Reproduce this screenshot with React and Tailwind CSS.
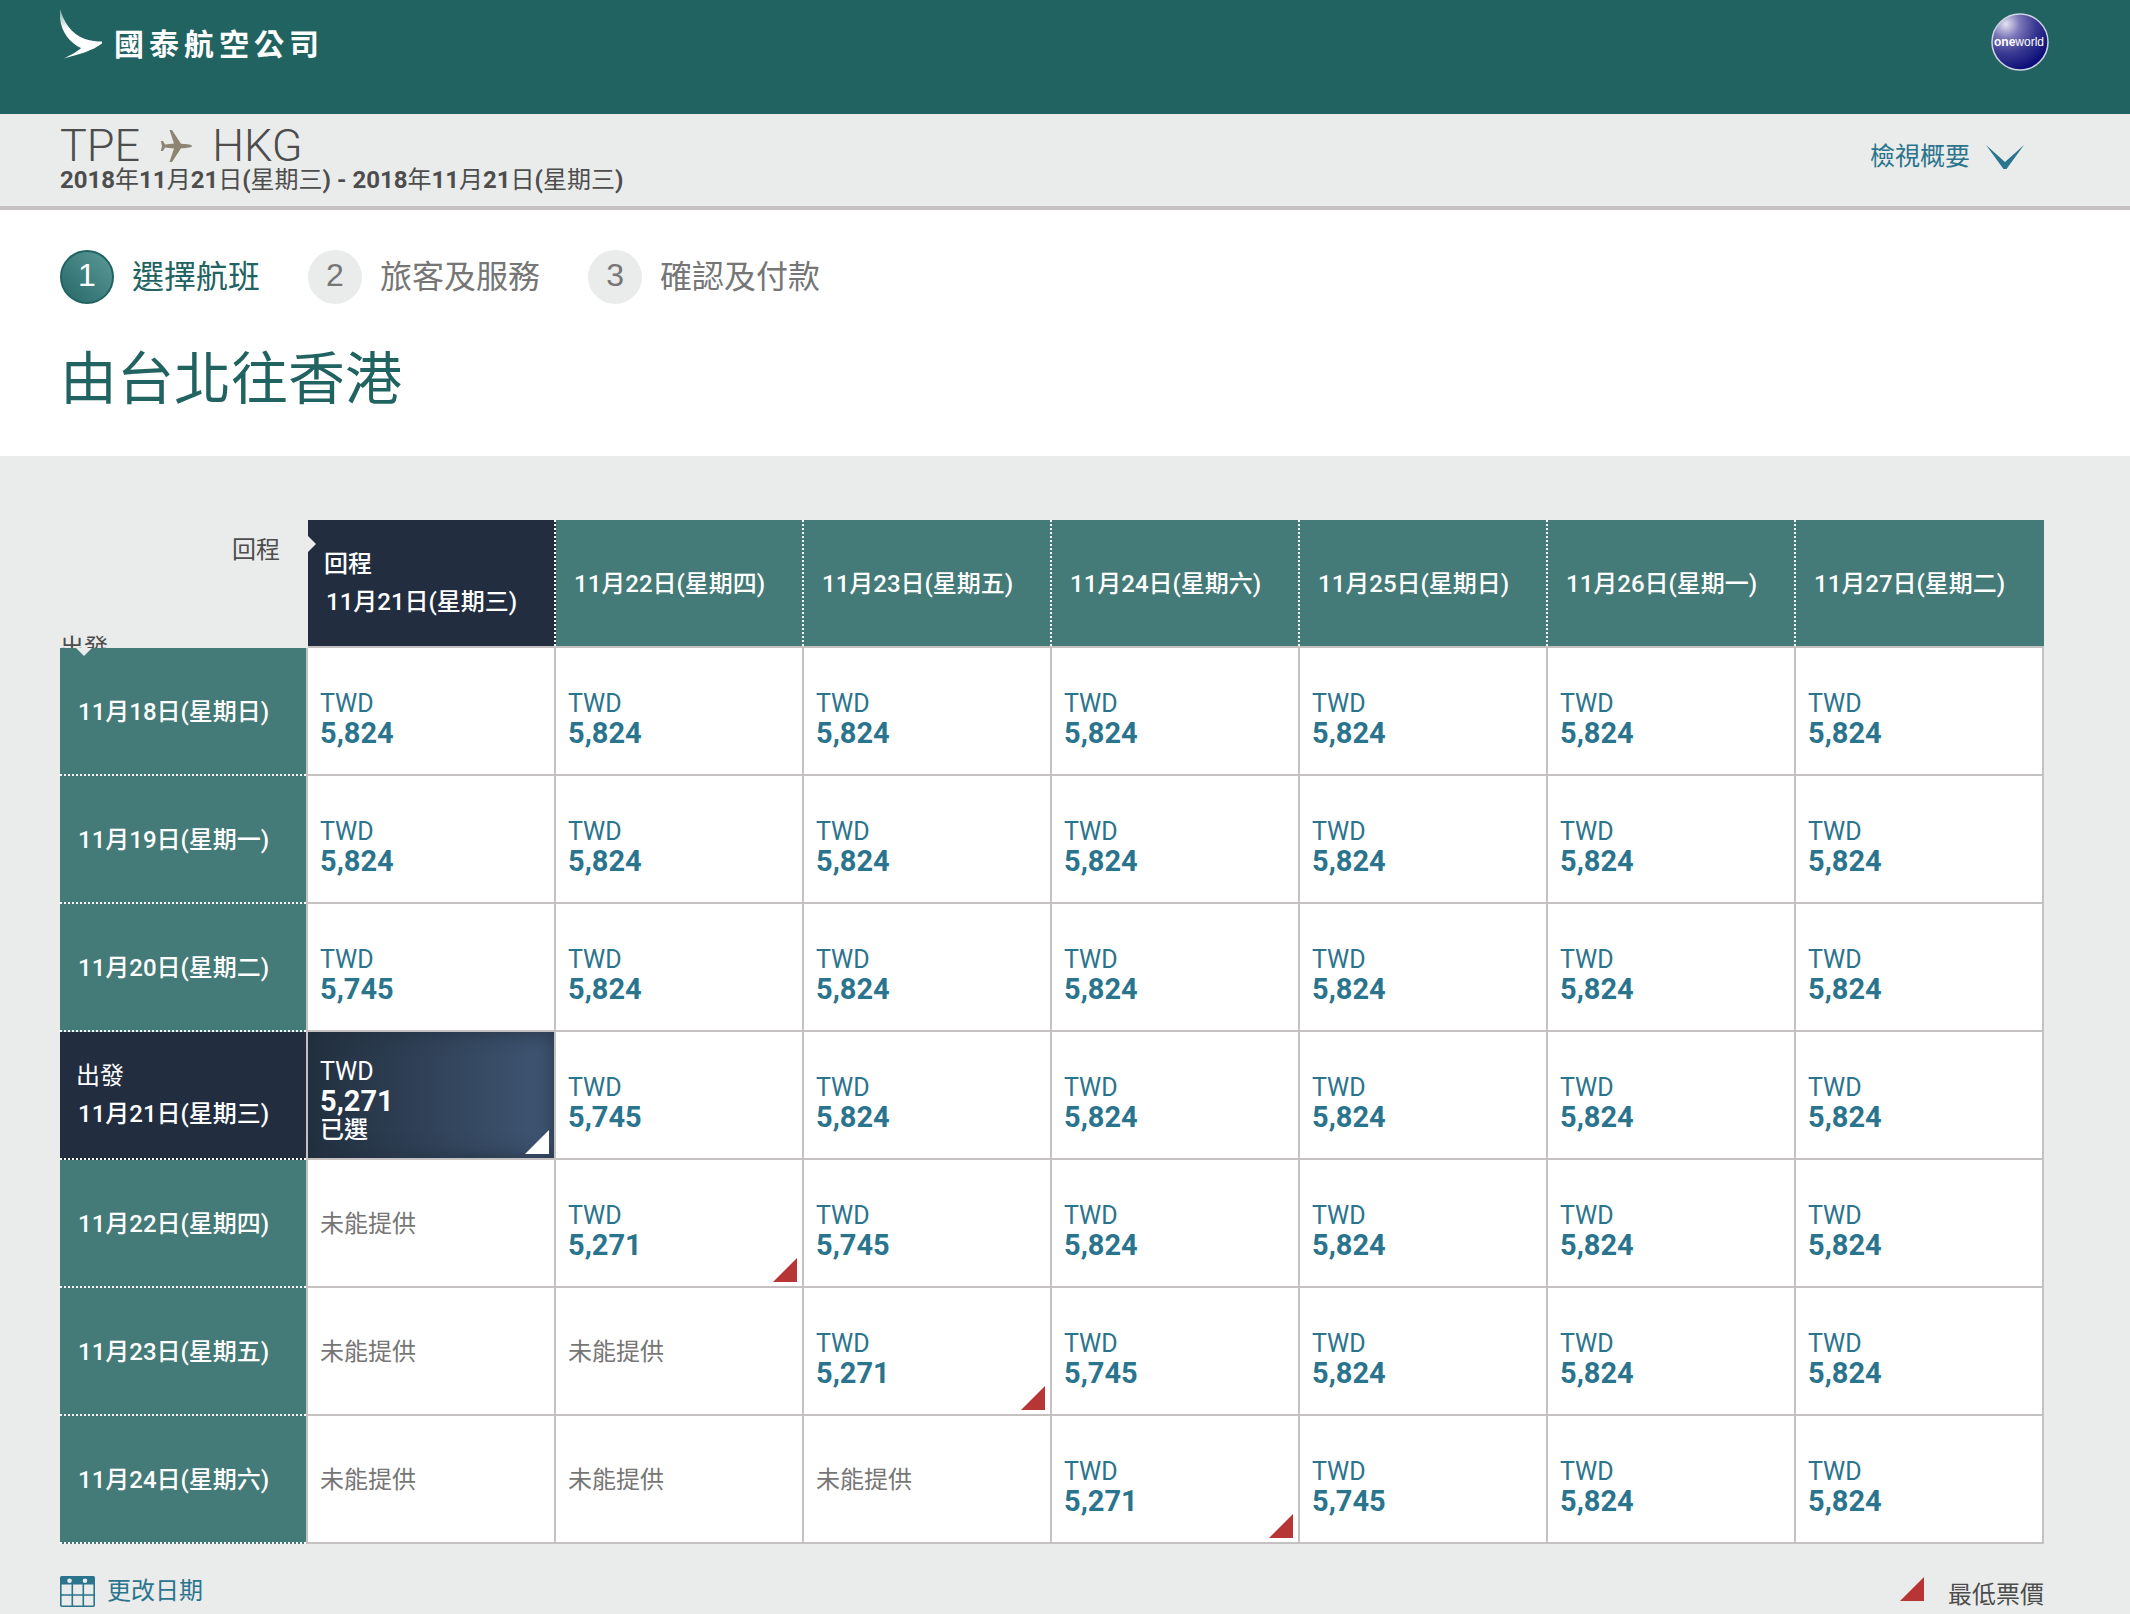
const RETURN_DATES = [
  '11月21日(星期三)',
  '11月22日(星期四)',
  '11月23日(星期五)',
  '11月24日(星期六)',
  '11月25日(星期日)',
  '11月26日(星期一)',
  '11月27日(星期二)',
];

const ROWS = [
  { date: '11月18日(星期日)', fares: ['5,824', '5,824', '5,824', '5,824', '5,824', '5,824', '5,824'] },
  { date: '11月19日(星期一)', fares: ['5,824', '5,824', '5,824', '5,824', '5,824', '5,824', '5,824'] },
  { date: '11月20日(星期二)', fares: ['5,745', '5,824', '5,824', '5,824', '5,824', '5,824', '5,824'] },
  { date: '11月21日(星期三)', selected: true, fares: ['5,271', '5,745', '5,824', '5,824', '5,824', '5,824', '5,824'] },
  { date: '11月22日(星期四)', fares: [null, '5,271', '5,745', '5,824', '5,824', '5,824', '5,824'] },
  { date: '11月23日(星期五)', fares: [null, null, '5,271', '5,745', '5,824', '5,824', '5,824'] },
  { date: '11月24日(星期六)', fares: [null, null, null, '5,271', '5,745', '5,824', '5,824'] },
];

const LOWEST = '5,271';

const STEPS = ['選擇航班', '旅客及服務', '確認及付款'];

function Corner({ className }) {
  return (
    <svg className={className} width="24" height="24" viewBox="0 0 24 24" aria-hidden="true">
      <path d="M24 0V24H0Z" fill="currentColor" />
    </svg>
  );
}

function BrushWing() {
  return (
    <svg width="42" height="50" viewBox="0 0 42 50" aria-hidden="true">
      <defs>
        <linearGradient id="wing" x1="0" y1="0" x2="0.3" y2="1">
          <stop offset="0" stopColor="#fff" stopOpacity="0.4" />
          <stop offset="0.4" stopColor="#fff" />
        </linearGradient>
      </defs>
      <path d="M0 0C4 13 11 25 25 30C31 32 37 32.500 42 32.500V34.500C32 42 20 45 4 49.500C12 45.500 18 42 21 39C8 33 -2 19 0 0Z" fill="url(#wing)" />
    </svg>
  );
}

function OneworldBadge() {
  return (
    <svg width="58" height="58" viewBox="0 0 58 58" role="img" aria-label="oneworld">
      <defs>
        <radialGradient id="globe" cx="0.25" cy="0.18" r="0.85">
          <stop offset="0" stopColor="#e4e2f2" />
          <stop offset="0.3" stopColor="#7a76b8" />
          <stop offset="0.62" stopColor="#3b3a92" />
          <stop offset="1" stopColor="#0c0f78" />
        </radialGradient>
      </defs>
      <circle cx="29" cy="29" r="28" fill="url(#globe)" stroke="#cfd3e2" strokeWidth="1.5" />
      <text x="28" y="33" textAnchor="middle" fontSize="12" fill="#fff" fontFamily="Liberation Sans, sans-serif">
        <tspan fontWeight="700">one</tspan>
        <tspan>world</tspan>
      </text>
    </svg>
  );
}

function Plane() {
  return (
    <svg width="32" height="32" viewBox="0 0 32 32" fill="#8d8471" aria-hidden="true">
      <path d="M32 16C32 17.300 28 18 21 18.300L12 32H9.500L14 18.500L5 17.600L3 21H0.800L2 16L0.800 11H3L5 14.400L14 13.500L9.500 0H12L21 13.700C28 14 32 14.700 32 16Z" />
    </svg>
  );
}

function CalendarIcon() {
  return (
    <svg width="35" height="31" viewBox="0 0 35 31" aria-hidden="true">
      <rect x="0.800" y="0.800" width="33.400" height="29.400" rx="1" fill="none" stroke="#2a748d" strokeWidth="1.600" />
      <path d="M0.800 0.800H34.200V8.500H0.800Z" fill="#2a748d" />
      <path d="M1 19H34M12.300 8V30M23.300 8V30" stroke="#2a748d" strokeWidth="1.600" />
      <circle cx="9.500" cy="4.700" r="2.300" fill="#eaeceb" />
      <circle cx="25" cy="4.700" r="2.300" fill="#eaeceb" />
    </svg>
  );
}

function Steps() {
  return (
    <ol className="flex gap-12">
      {STEPS.map((label, i) => (
        <li key={label} className={`flex items-center gap-[18px] text-[32px] leading-[54px] ${i === 0 ? 'text-[#216361]' : 'text-[#767676]'}`}>
          <span
            className={
              i === 0
                ? "size-[54px] rounded-full border-2 border-[#216361] bg-linear-to-tr from-[#27686a] to-[#5a9a96] text-center font-['Liberation_Sans',sans-serif] leading-[46px] text-white"
                : "size-[54px] rounded-full bg-[#eaeceb] text-center font-['Liberation_Sans',sans-serif] leading-[50px]"
            }
          >
            {i + 1}
          </span>
          <span>{label}</span>
        </li>
      ))}
    </ol>
  );
}

function FareCell({ fare, selected }) {
  if (!fare) {
    return (
      <td className="h-32 border-r-2 border-b-2 border-[#c5c1c1] bg-white px-3 text-2xl text-[#767676]">
        <div className="pt-0.5">未能提供</div>
      </td>
    );
  }
  return (
    <td className="h-32 border-r-2 border-b-2 border-[#c5c1c1] bg-white p-0">
      <button
        type="button"
        className={`relative flex h-[126px] w-full flex-col justify-center px-3 text-left ${
          selected
            ? 'bg-linear-to-r from-[#22303f] to-[#405674] pt-3 text-white shadow-[inset_0_0_20px_rgba(32,45,60,0.8)]'
            : 'pt-4 text-[#2a748d]'
        }`}
      >
        <span className="text-[25px] leading-7">TWD</span>
        <span className="text-[29px] leading-[30px] font-bold">{fare}</span>
        {selected && <span className="text-2xl leading-7 font-medium">已選</span>}
        {fare === LOWEST && (
          <Corner className={`absolute right-[5px] bottom-1 ${selected ? 'text-white' : 'text-[#b73535]'}`} />
        )}
      </button>
    </td>
  );
}

function FareTable() {
  return (
    <table className="w-full table-fixed border-separate border-spacing-0">
      <thead>
        <tr>
          <td className="h-32 p-0 align-top text-2xl text-[#4d4d4d]">
            <div className="flex h-32 flex-col justify-between overflow-hidden">
              <span className="pt-3 pr-7 text-right leading-9">回程</span>
              <span className="h-4 leading-8">出發</span>
            </div>
          </td>
          {RETURN_DATES.map((date, i) => (
            <th
              key={date}
              scope="col"
              className={`h-32 border-b-2 border-b-[#c5c1c1] p-0 text-left text-2xl font-medium text-white ${
                i === 0 ? 'bg-[#222e40]' : 'bg-[#447a77]'
              }`}
            >
              <div
                className={`relative flex h-[126px] flex-col justify-center ${
                  i < 6 ? 'border-r-2 border-dotted border-white' : ''
                } ${i > 0 ? 'pt-0.5' : ''}`}
              >
                {i === 0 && (
                  <>
                    <svg className="absolute top-4 left-0" width="8" height="16" viewBox="0 0 8 16" aria-hidden="true">
                      <path d="M0 0L8 8L0 16Z" fill="#eaeceb" />
                    </svg>
                    <span className="pl-4 leading-[38px]">回程</span>
                  </>
                )}
                <span className="pl-[18px] leading-[38px]">{date}</span>
              </div>
            </th>
          ))}
        </tr>
      </thead>
      <tbody>
        {ROWS.map((row, r) => (
          <tr key={row.date}>
            <th
              scope="row"
              className={`h-32 border-r-2 border-r-[#c5c1c1] p-0 text-left text-2xl font-medium text-white ${
                row.selected ? 'bg-[#222e40]' : 'bg-[#447a77]'
              }`}
            >
              <div
                className={`relative flex h-32 flex-col justify-center border-b-2 border-dotted border-white ${
                  row.selected ? '' : 'pt-0.5'
                }`}
              >
                {r === 0 && (
                  <svg className="absolute top-0 left-4" width="16" height="8" viewBox="0 0 16 8" aria-hidden="true">
                    <path d="M0 0H16L8 8Z" fill="#eaeceb" />
                  </svg>
                )}
                {row.selected && <span className="pl-4 leading-[38px] font-normal">出發</span>}
                <span className="pl-[18px] leading-[38px]">{row.date}</span>
              </div>
            </th>
            {row.fares.map((fare, c) => (
              <FareCell key={c} fare={fare} selected={row.selected && c === 0} />
            ))}
          </tr>
        ))}
      </tbody>
    </table>
  );
}

export default function App() {
  return (
    <div className="min-h-screen bg-[#eaeceb] font-['Roboto','Noto_Sans_CJK_TC',sans-serif] text-[#4d4d4d]">
      <header className="flex h-[114px] items-start justify-between bg-[#216361] pr-[81px] pl-[60px]">
        <a href="#" className="flex pt-[9px] text-white">
          <BrushWing />
          <span className="flex gap-[5px] pt-4 pl-3 text-[30px] leading-10 font-bold">
            {[...'國泰航空公司'].map((ch) => (
              <span key={ch}>{ch}</span>
            ))}
          </span>
        </a>
        <a href="#" className="pt-[13px]">
          <OneworldBadge />
        </a>
      </header>

      <section className="flex h-24 items-start justify-between border-b-4 border-[#c5c1c1] pr-[106px] pl-[60px]">
        <div className="pt-3">
          <h2 className="flex items-center gap-5 text-[45px] leading-10 font-light">
            <span>TPE</span>
            <Plane />
            <span>HKG</span>
          </h2>
          <p className="text-2xl leading-7">
            <b>2018</b>年<b>11</b>月<b>21</b>日<b>(</b>星期三<b>) - 2018</b>年<b>11</b>月<b>21</b>日<b>(</b>星期三<b>)</b>
          </p>
        </div>
        <button type="button" className="flex items-center gap-4 pt-[25px] text-[25px] leading-9 text-[#2a748d]">
          檢視概要
          <svg width="38" height="24" viewBox="0 0 38 24" aria-hidden="true">
            <path d="M0 0L19 17L38 0L20.500 24H17.500Z" fill="#2a748d" />
          </svg>
        </button>
      </section>

      <main>
        <section className="bg-white px-[60px] pt-10 pb-9">
          <Steps />
          <h1 className="pt-9 text-[57px] leading-[80px] text-[#216361]">由台北往香港</h1>
        </section>

        <section className="pt-16 pr-[86px] pl-[60px]">
          <FareTable />
          <div className="flex items-start justify-between pt-[29px]">
            <button type="button" className="flex items-center gap-3 text-2xl leading-9 text-[#2a748d]">
              <CalendarIcon />
              更改日期
            </button>
            <p className="flex items-start gap-6 pt-1 text-2xl leading-9">
              <Corner className="text-[#b73535]" />
              最低票價
            </p>
          </div>
        </section>
      </main>
    </div>
  );
}
